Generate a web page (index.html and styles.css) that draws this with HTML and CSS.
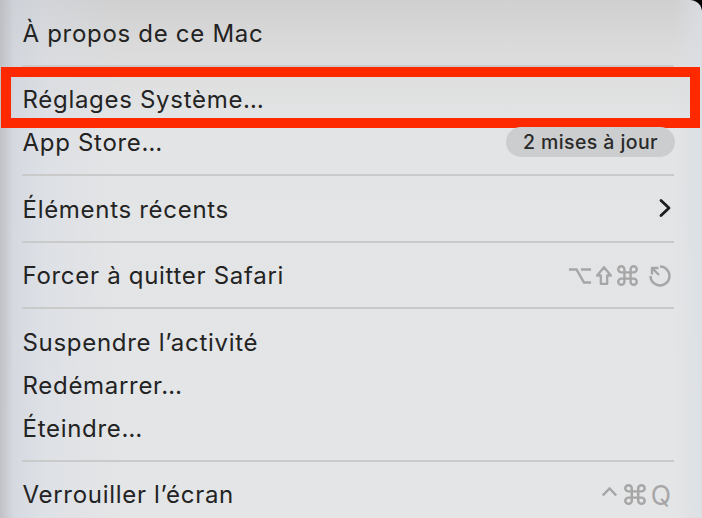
FILE: index.html
```html
<!DOCTYPE html>
<html lang="fr">
<head>
<meta charset="utf-8">
<title>Menu Apple</title>
<link rel="stylesheet" href="styles.css">
</head>
<body>
<div class="menu">
  <div class="item"><span class="label">À propos de ce Mac</span></div>
  <div class="sep"></div>
  <div class="item marked"><span class="label">Réglages Système…</span></div>
  <div class="item"><span class="label">App Store…</span><span class="badge">2 mises à jour</span></div>
  <div class="sep"></div>
  <div class="item"><span class="label">Éléments récents</span>
    <svg class="chev" width="14" height="20" viewBox="0 0 14 20"><path d="M3 2.5 L11 10 L3 17.5" fill="none" stroke="#1e1e1e" stroke-width="2.8" stroke-linecap="round" stroke-linejoin="round"/></svg>
  </div>
  <div class="sep"></div>
  <div class="item"><span class="label">Forcer à quitter Safari</span>
    <span class="keys">
      <svg class="k-opt" width="22" height="20" viewBox="0 0 22 20"><path d="M0 3.5 H7.5 L15 16.5 H22 M12 3.5 H22" fill="none" stroke="currentColor" stroke-width="2.5"/></svg>
      <svg class="k-shift" width="16" height="19" viewBox="0 0 16 19"><path d="M8 1.2 L1.1 9.5 H4.8 V17.8 H11.2 V9.5 H14.9 Z" fill="none" stroke="currentColor" stroke-width="2.3" stroke-linejoin="round"/></svg>
      <svg class="k-cmd" width="21" height="21" viewBox="1.8 1.8 20.4 20.4"><path d="M9 9 V6 A3 3 0 1 0 6 9 H18 A3 3 0 1 0 15 6 V18 A3 3 0 1 0 18 15 H6 A3 3 0 1 0 9 18 Z" fill="none" stroke="currentColor" stroke-width="2.3"/></svg>
      <svg class="k-esc" width="22" height="22" viewBox="1 1 22 22"><path d="M12 2.5 A9.5 9.5 0 1 1 2.5 12" fill="none" stroke="currentColor" stroke-width="2.4"/><path d="M11 11 L4 4 M4 10.5 V4 H10.5" fill="none" stroke="currentColor" stroke-width="2.4" stroke-linejoin="round"/></svg>
    </span>
  </div>
  <div class="sep"></div>
  <div class="item"><span class="label">Suspendre l’activité</span></div>
  <div class="item"><span class="label">Redémarrer…</span></div>
  <div class="item"><span class="label">Éteindre…</span></div>
  <div class="sep"></div>
  <div class="item"><span class="label">Verrouiller l’écran</span>
    <span class="keys">
      <svg class="k-ctrl" width="15" height="20" viewBox="0 0 15 20"><path d="M0.8 10.5 L7.5 3.5 L14.2 10.5" fill="none" stroke="currentColor" stroke-width="2.4"/></svg>
      <svg class="k-cmd2" width="22" height="21" viewBox="1.8 1.8 20.4 20.4" preserveAspectRatio="none"><path d="M9 9 V6 A3 3 0 1 0 6 9 H18 A3 3 0 1 0 15 6 V18 A3 3 0 1 0 18 15 H6 A3 3 0 1 0 9 18 Z" fill="none" stroke="currentColor" stroke-width="2.3"/></svg>
      <span class="q">Q</span>
    </span>
  </div>
</div>
</body>
</html>
```
FILE: styles.css
```css
html, body {
  margin: 0;
  padding: 0;
  background: #000;
}
.menu {
  width: 702px;
  height: 518px;
  box-sizing: border-box;
  overflow: hidden;
  border-top-right-radius: 12px;
  padding: 11.5px 28px 0 22px;
  font-family: Inter, "Noto Sans", sans-serif;
  color: #232323;
  background:
    linear-gradient(90deg, rgba(185,187,192,0.85) 0px, rgba(205,210,220,0.6) 14px, rgba(212,218,229,0.4) 45px, rgba(226,227,229,0) 120px),
    linear-gradient(270deg, rgba(218,222,228,0.8) 0px, rgba(224,226,230,0) 28px),
    linear-gradient(180deg, #d0d0d0 0px, #dbdbdb 50px, #e3e4e5 120px, #e4e5e6 100%);
}
.item {
  position: relative;
  height: 43px;
  display: flex;
  align-items: center;
  justify-content: space-between;
}
.label {
  font-size: 24px;
  letter-spacing: 0.7px;
  padding-left: 0.5px;
}
.marked::after {
  content: "";
  position: absolute;
  left: -21px;
  right: -26px;
  top: -11px;
  bottom: -7px;
  border: 10px solid #ff2900;
}
.sep {
  height: 2px;
  margin: 10px 0 11.5px;
  background: #cacaca;
}
.badge {
  height: 30px;
  line-height: 30px;
  padding: 0 17px;
  margin-right: -1px;
  margin-top: -1px;
  border-radius: 15px;
  background: #cccdce;
  font-size: 19.5px;
  letter-spacing: 0.4px;
  font-weight: 500;
  color: #2a2a2a;
}
.chev {
  margin-right: 2px;
  margin-top: -3px;
}
.keys {
  display: flex;
  align-items: center;
  color: #a6a6a6;
  margin-right: 3px;
}
.k-shift { margin-left: 5px; }
.k-cmd { margin-left: 5px; }
.k-esc { margin-left: 11px; }
.k-cmd2 { margin-left: 7px; }
.q {
  font-size: 26.5px;
  line-height: 26px;
  color: #a6a6a6;
  margin-left: 5px;
}
```
